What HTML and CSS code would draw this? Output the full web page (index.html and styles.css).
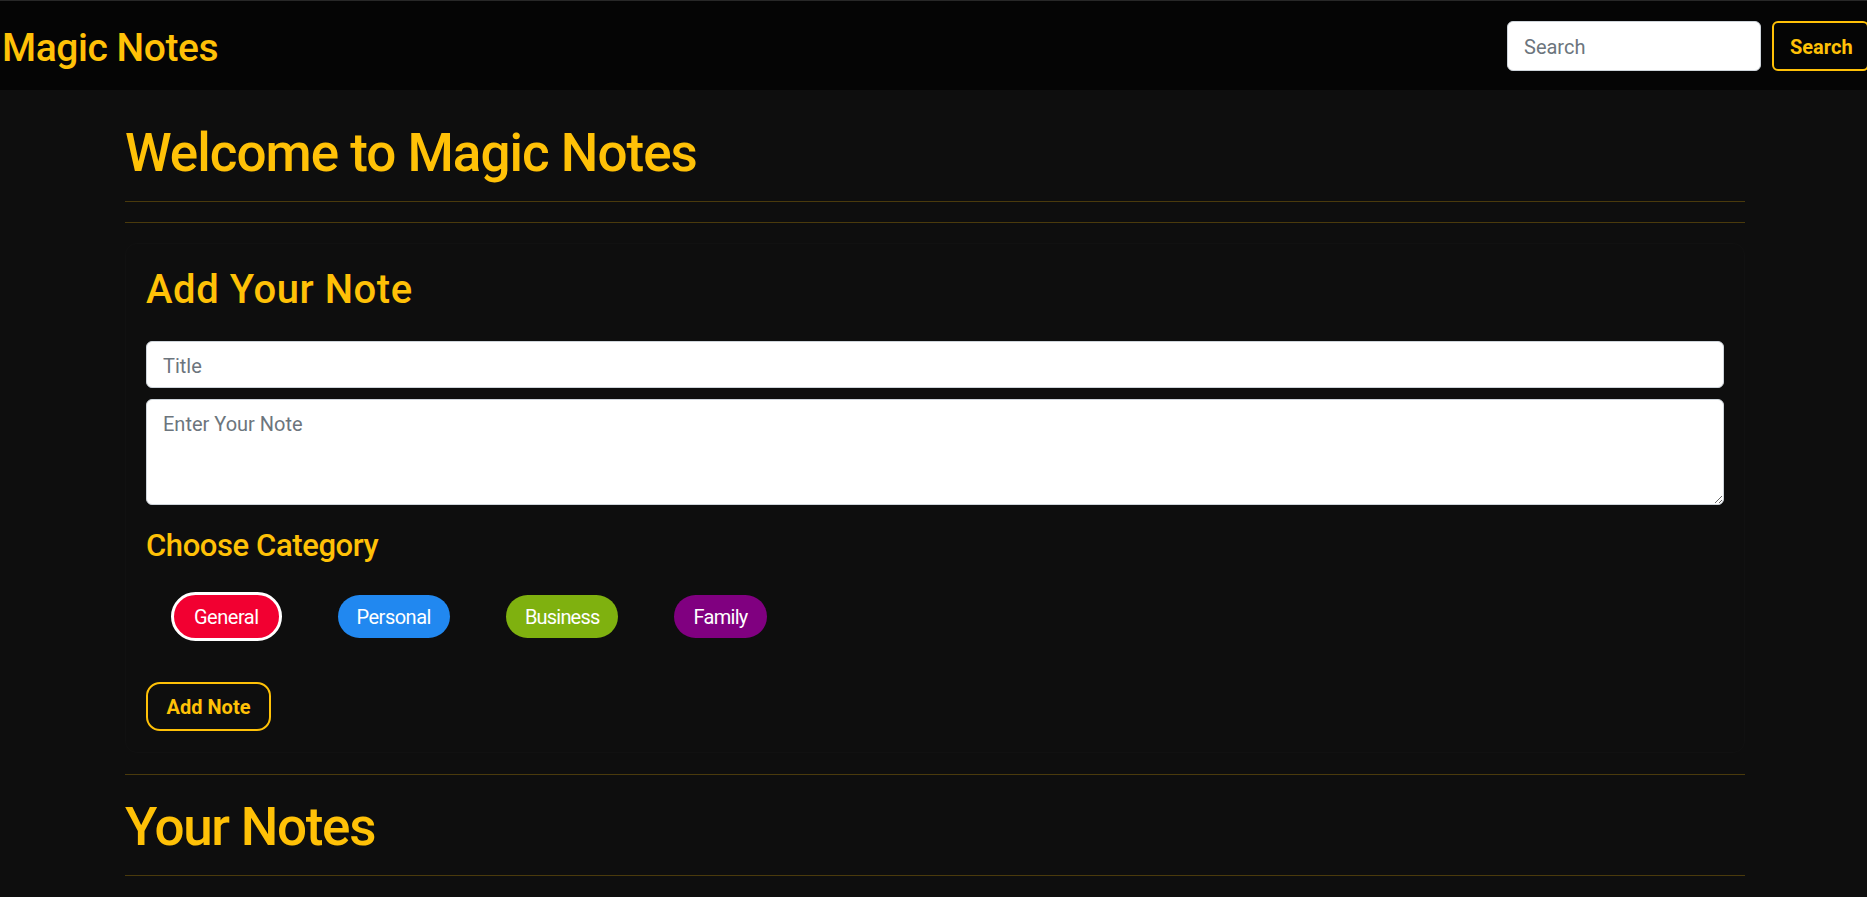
FILE: index.html
```html
<!DOCTYPE html>
<html lang="en">
<head>
<meta charset="utf-8">
<title>Magic Notes</title>
<link rel="stylesheet" href="styles.css">
</head>
<body>
<nav class="navbar">
  <a class="brand" href="#">Magic Notes</a>
  <form class="search-form">
    <input class="search-input" type="search" placeholder="Search">
    <button class="btn-gold search-btn" type="button">Search</button>
  </form>
</nav>
<main class="container">
  <h1 class="page-title">Welcome to Magic Notes</h1>
  <hr class="rule rule-first">
  <hr class="rule">
  <section class="card">
    <h2 class="card-title">Add Your Note</h2>
    <input class="field field-title" type="text" placeholder="Title">
    <textarea class="field field-note" placeholder="Enter Your Note"></textarea>
    <h3 class="category-title">Choose Category</h3>
    <div class="pills">
      <button class="pill pill-general pill-active" type="button">General</button>
      <button class="pill pill-personal" type="button">Personal</button>
      <button class="pill pill-business" type="button">Business</button>
      <button class="pill pill-family" type="button">Family</button>
    </div>
    <button class="btn-gold add-btn" type="button">Add Note</button>
  </section>
  <hr class="rule rule-notes">
  <h1 class="notes-title">Your Notes</h1>
  <hr class="rule rule-bottom">
</main>
</body>
</html>
```
FILE: styles.css
```css
* { box-sizing: border-box; }

html, body {
  margin: 0;
  padding: 0;
  background: #0e0e0e;
  overflow-x: hidden;
}

body {
  font-family: Roboto, "Liberation Sans", sans-serif;
  color: #ffc107;
}

.navbar {
  height: 90px;
  background: #050505;
  border-top: 1px solid #282828;
  display: flex;
  align-items: center;
  justify-content: space-between;
  padding: 0 0 0 2px;
  overflow: hidden;
}

.brand {
  font-size: 39px;
  font-weight: 500;
  line-height: 47px;
  letter-spacing: -0.45px;
  color: #ffc107;
  text-decoration: none;
  padding-top: 5px;
}

.search-form {
  display: flex;
  align-items: center;
  gap: 11px;
  margin-right: -2px;
}

.search-input {
  width: 254px;
  height: 50px;
  padding: 3px 16px 0;
  border: 1px solid #ced4da;
  border-radius: 6px;
  background: #fff;
  font-family: inherit;
  font-size: 20px;
  color: #212529;
  outline: none;
}

.search-input::placeholder,
.field::placeholder {
  color: #6c757d;
}

.btn-gold {
  background: transparent;
  border: 2px solid #ffc107;
  color: #ffc107;
  font-family: inherit;
  font-weight: 700;
  font-size: 20px;
  cursor: pointer;
}

.search-btn {
  width: 97px;
  height: 50px;
  border-radius: 6px;
  padding: 3px 16px 0;
  text-align: left;
}

.container {
  padding: 0 122px 0 125px;
}

.page-title,
.notes-title {
  font-size: 53px;
  font-weight: 500;
  line-height: 66px;
  letter-spacing: -1px;
  margin: 30px 0 0;
}

.notes-title {
  letter-spacing: -1.3px;
  margin: 19px 0 0;
}

.rule {
  border: 0;
  height: 1px;
  background: rgba(255, 193, 7, 0.25);
  margin: 0 0 20px;
}

.rule-first { margin-top: 15px; }
.rule-notes { margin: 21px 0 0; }
.rule-bottom { margin: 15px 0 0; }

.card {
  border: 1px solid #111111;
  border-radius: 12px;
  padding: 22px 20px 21px 20px;
  display: flex;
  flex-direction: column;
  align-items: flex-start;
}

.card-title {
  font-size: 40px;
  font-weight: 500;
  line-height: 47px;
  letter-spacing: 0.55px;
  margin: 0 0 28px;
}

.field {
  width: 100%;
  border: 1px solid #ced4da;
  border-radius: 6px;
  background: #fff;
  font-family: inherit;
  font-size: 20px;
  color: #212529;
  padding: 0 16px;
  outline: none;
}

.field-title {
  height: 47px;
  padding-top: 2px;
}

.field-note {
  height: 106px;
  margin-top: 11px;
  padding: 9px 16px 8px;
  line-height: 30px;
  resize: vertical;
}

.category-title {
  font-size: 31px;
  font-weight: 500;
  line-height: 37px;
  letter-spacing: -0.4px;
  margin: 22px 0 0;
}

.pills {
  display: flex;
  align-items: center;
  gap: 56px;
  padding-left: 25px;
  margin-top: 28px;
  height: 49px;
}

.pill {
  height: 43px;
  border: 0;
  border-radius: 22px;
  padding: 0 19px;
  font-family: inherit;
  font-size: 20px;
  letter-spacing: -0.5px;
  color: #fff;
  cursor: pointer;
}

.pill-active {
  height: 49px;
  border: 3px solid #fff;
  border-radius: 25px;
  padding: 0 20px;
}

.pill-general { background: #f20031; }
.pill-personal { background: #2188f0; }
.pill-business { background: #7fb10f; letter-spacing: -0.8px; }
.pill-family { background: #800080; letter-spacing: -0.7px; }

.add-btn {
  margin-top: 41px;
  height: 49px;
  width: 125px;
  border-radius: 14px;
  padding: 0;
}
```
